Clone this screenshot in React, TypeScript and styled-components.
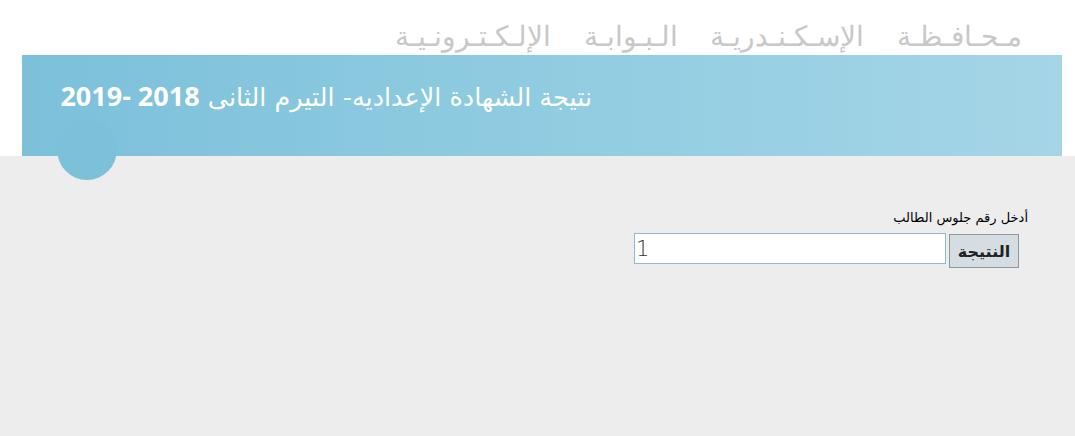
import React from 'react';
import styled, { createGlobalStyle } from 'styled-components';

const GlobalStyle = createGlobalStyle`
  html, body {
    margin: 0;
    padding: 0;
    background: #ffffff;
    font-family: "DejaVu Sans", "Noto Sans", sans-serif;
  }
`;

const Page = styled.div`
  width: 100%;
  min-height: 436px;
  display: flex;
  flex-direction: column;
`;

// اسم البوابة أعلى الصفحة
const SiteHeader = styled.div`
  height: 55px;
  display: flex;
  align-items: flex-end;
  justify-content: flex-end;
  padding-right: 53px;
  box-sizing: border-box;
`;

const SiteName = styled.div`
  direction: rtl;
  font-family: "DejaVu Sans", sans-serif;
  font-weight: 300;
  font-size: 27.5px;
  word-spacing: 24px;
  color: #c8c8c8;
  line-height: 1;
  margin-bottom: 5px;
  white-space: nowrap;
`;

const Banner = styled.div`
  margin: 0 13px 0 22px;
  height: 101px;
  background: linear-gradient(to right, #7cc0da 0%, #8ecbe0 45%, #a5d5e7 100%);
  display: flex;
  justify-content: flex-end;
  padding: 22px 470px 0 0;
  box-sizing: border-box;
`;

const BannerTitle = styled.h1`
  margin: 0;
  direction: rtl;
  color: #ffffff;
  font-family: "DejaVu Sans", sans-serif;
  font-weight: normal;
  font-size: 25.5px;
  line-height: 38px;
  white-space: nowrap;
`;

const Year = styled.bdi`
  font-weight: bold;
  font-family: "Open Sans", "DejaVu Sans", sans-serif;
  font-size: 27px;
`;

const Content = styled.div`
  position: relative;
  flex: 1;
  height: 280px;
  background: #ededed;
  display: flex;
  justify-content: flex-end;
  padding: 54px 47px 0 0;
  box-sizing: border-box;
`;

// الدائرة أسفل الشريط
const Bubble = styled.div`
  position: absolute;
  left: 57px;
  top: -37px;
  width: 60px;
  height: 61px;
  border-radius: 50%;
  background: #7cc0da;
`;

const Form = styled.form`
  direction: rtl;
  display: flex;
  flex-direction: column;
  align-items: flex-start;
`;

const Label = styled.label`
  font-family: "DejaVu Sans", sans-serif;
  font-size: 13px;
  font-weight: normal;
  color: #000;
  margin-bottom: 8px;
`;

const Row = styled.div`
  display: flex;
  align-items: flex-start;
  gap: 3px;
  padding-right: 9px;
`;

const SubmitButton = styled.button`
  width: 70px;
  height: 34px;
  background: #d5dce2;
  border: 1px solid #8f979e;
  font-family: "DejaVu Sans", sans-serif;
  font-weight: bold;
  font-size: 16px;
  color: #222;
  padding: 0;
  margin-top: 1px;
`;

const SeatInput = styled.input`
  direction: ltr;
  text-align: left;
  width: 312px;
  height: 31px;
  box-sizing: border-box;
  border: 1px solid #8fbccd;
  background: #ffffff;
  font-family: "DejaVu Sans", sans-serif;
  font-weight: 300;
  font-size: 21px;
  color: #333;
  padding: 0 1px;
  outline: none;
`;

export default function App() {
  return (
    <Page>
      <GlobalStyle />
      <SiteHeader>
        <SiteName>مـحـافـظـة الإسـكـنـدريـة الـبـوابـة الإلـكـتـرونـيـة</SiteName>
      </SiteHeader>
      <Banner>
        <BannerTitle>
          نتيجة الشهادة الإعداديه- التيرم الثانى <Year dir="ltr">2019- 2018</Year>
        </BannerTitle>
      </Banner>
      <Content>
        <Bubble />
        <Form onSubmit={(e) => e.preventDefault()}>
          <Label htmlFor="seat">أدخل رقم جلوس الطالب</Label>
          <Row>
            <SubmitButton type="submit">النتيجة</SubmitButton>
            <SeatInput id="seat" defaultValue="1" />
          </Row>
        </Form>
      </Content>
    </Page>
  );
}
